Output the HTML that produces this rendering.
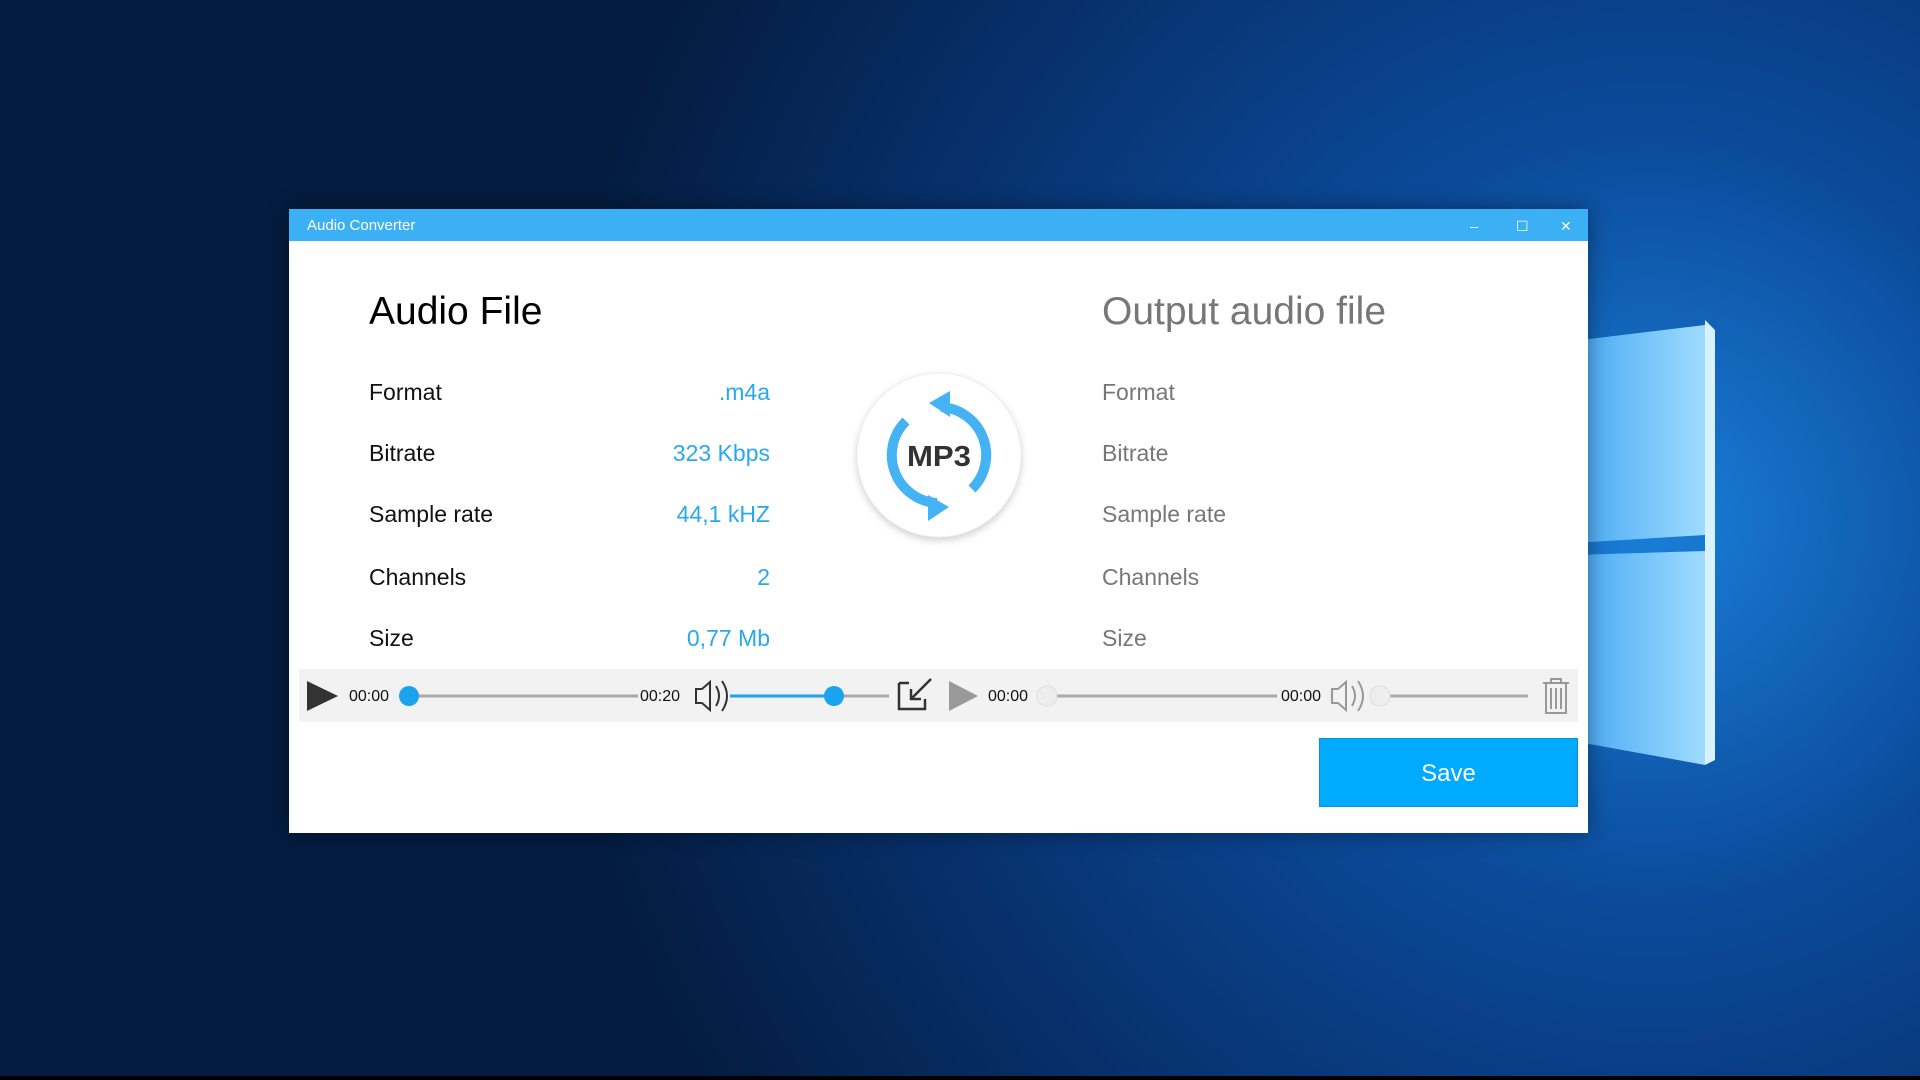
<!DOCTYPE html>
<html><head><meta charset="utf-8"><style>
*{margin:0;padding:0;box-sizing:border-box}
body{width:1920px;height:1080px;overflow:hidden;position:relative;font-family:"Liberation Sans",sans-serif;background:#0a2a5c}
.bg{position:absolute;inset:0}
.win{position:absolute;left:289px;top:209px;width:1299px;height:624px;background:#fff;box-shadow:0 0 20px rgba(0,0,0,.4)}
.tb{height:32px;background:#3bb0f5;color:#fff;font-size:15px;line-height:34px;padding-left:18px;position:relative}
.tb span{position:absolute;top:0;font-size:14px}
.h{position:absolute;font-size:39px}
.l{position:absolute;font-size:23px;color:#111}
.v{position:absolute;font-size:23px;color:#29a8f0;text-align:right;width:200px}
.g{color:#777}
.bar{position:absolute;left:10px;top:460px;width:1279px;height:53px;background:#f2f2f2}
.t{position:absolute;font-size:16px;top:19px;color:#111}
.save{position:absolute;left:1030px;top:529px;width:259px;height:69px;background:#00aaff;color:#fff;font-size:24px;text-align:center;line-height:69px;border:1px solid #0a8fd8}
</style></head><body>
<svg class="bg" width="1920" height="1080">
<defs>
<radialGradient id="r" cx="1650" cy="520" r="1100" gradientUnits="userSpaceOnUse">
<stop offset="0" stop-color="#1a7fd8"/><stop offset=".35" stop-color="#0b4a9a"/><stop offset=".7" stop-color="#07306b"/><stop offset="1" stop-color="#041c40"/></radialGradient>
<linearGradient id="p" x1="0" x2="1"><stop offset="0" stop-color="#2f9af0"/><stop offset="1" stop-color="#9fdcff"/></linearGradient>
</defs>
<rect width="1920" height="1080" fill="url(#r)"/>
<polygon points="1540,345 1705,325 1705,535 1540,545" fill="url(#p)"/>
<polygon points="1540,556 1705,551 1705,765 1540,735" fill="url(#p)"/>
<polygon points="1705,320 1715,330 1715,760 1705,765" fill="#d8f2ff"/>
<rect x="0" y="1076" width="1920" height="4" fill="#000"/>
</svg>
<div class="win">
<div class="tb">Audio Converter<span style="left:1181px">–</span><span style="left:1227px">☐</span><span style="left:1271px">✕</span></div>
<div class="h" style="left:80px;top:81px">Audio File</div>
<div class="h g" style="left:813px;top:81px">Output audio file</div>
<div class="l" style="left:80px;top:170px">Format</div>
<div class="l" style="left:80px;top:231px">Bitrate</div>
<div class="l" style="left:80px;top:292px">Sample rate</div>
<div class="l" style="left:80px;top:355px">Channels</div>
<div class="l" style="left:80px;top:416px">Size</div>
<div class="v" style="left:281px;top:170px">.m4a</div>
<div class="v" style="left:281px;top:231px">323 Kbps</div>
<div class="v" style="left:281px;top:292px">44,1 kHZ</div>
<div class="v" style="left:281px;top:355px">2</div>
<div class="v" style="left:281px;top:416px">0,77 Mb</div>
<div class="l g" style="left:813px;top:170px">Format</div>
<div class="l g" style="left:813px;top:231px">Bitrate</div>
<div class="l g" style="left:813px;top:292px">Sample rate</div>
<div class="l g" style="left:813px;top:355px">Channels</div>
<div class="l g" style="left:813px;top:416px">Size</div>
<svg style="position:absolute;left:560px;top:160px" width="180" height="180" viewBox="0 0 180 180">
<circle cx="90" cy="86" r="82" fill="#fff" style="filter:drop-shadow(0 3px 4px rgba(0,0,0,.2))"/>
<circle cx="90" cy="86" r="82" fill="#fff" stroke="#eee"/>
<path d="M57,52 A48,48 0 0 0 88,134" fill="none" stroke="#45b2f3" stroke-width="10"/>
<path d="M123,120 A48,48 0 0 0 92,38" fill="none" stroke="#45b2f3" stroke-width="10"/>
<polygon points="80,34 101,22 101,48" fill="#45b2f3"/>
<polygon points="100,138 79,126 79,152" fill="#45b2f3"/>
<text x="90" y="97" text-anchor="middle" font-family="Liberation Sans" font-weight="bold" font-size="29" fill="#333" textLength="64" lengthAdjust="spacingAndGlyphs">MP3</text>
</svg>
<div class="bar">
<svg style="position:absolute;left:0;top:0" width="1279" height="53">
<polygon points="8,12 39,27 8,42" fill="#333"/>
<line x1="110" y1="27" x2="339" y2="27" stroke="#aaa" stroke-width="3"/>
<circle cx="110" cy="27" r="10" fill="#1ba3f0"/>
<path d="M397,20 h6 l8,-7 v28 l-8,-7 h-6z M417,17 q6,10 0,20 M423,12 q10,15 0,30" fill="none" stroke="#333" stroke-width="2"/>
<line x1="431" y1="27" x2="590" y2="27" stroke="#aaa" stroke-width="3"/>
<line x1="431" y1="27" x2="535" y2="27" stroke="#1ba3f0" stroke-width="3"/>
<circle cx="535" cy="27" r="10" fill="#1ba3f0"/>
<path d="M600,14 v26 h26 v-10 M600,14 h10 M632,10 l-20,20 M612,20 v10 h10" fill="none" stroke="#333" stroke-width="2.5"/>
<polygon points="650,12 679,27 650,42" fill="#999"/>
<line x1="748" y1="27" x2="978" y2="27" stroke="#aaa" stroke-width="3"/>
<circle cx="748" cy="27" r="10" fill="#eee" stroke="#ddd"/>
<path d="M1033,20 h6 l8,-7 v28 l-8,-7 h-6z M1053,17 q6,10 0,20 M1059,12 q10,15 0,30" fill="none" stroke="#999" stroke-width="2"/>
<line x1="1081" y1="27" x2="1229" y2="27" stroke="#aaa" stroke-width="3"/>
<circle cx="1081" cy="27" r="10" fill="#eee" stroke="#ddd"/>
<path d="M1244,14 h26 M1252,14 v-4 h10 v4 M1247,14 v30 h20 v-30 M1252,19 v21 M1257,19 v21 M1262,19 v21" fill="none" stroke="#999" stroke-width="2"/>
</svg>
<div class="t" style="left:50px">00:00</div>
<div class="t" style="left:341px">00:20</div>
<div class="t g" style="left:689px">00:00</div>
<div class="t g" style="left:982px">00:00</div>
</div>
<div class="save">Save</div>
</div>
</body></html>
